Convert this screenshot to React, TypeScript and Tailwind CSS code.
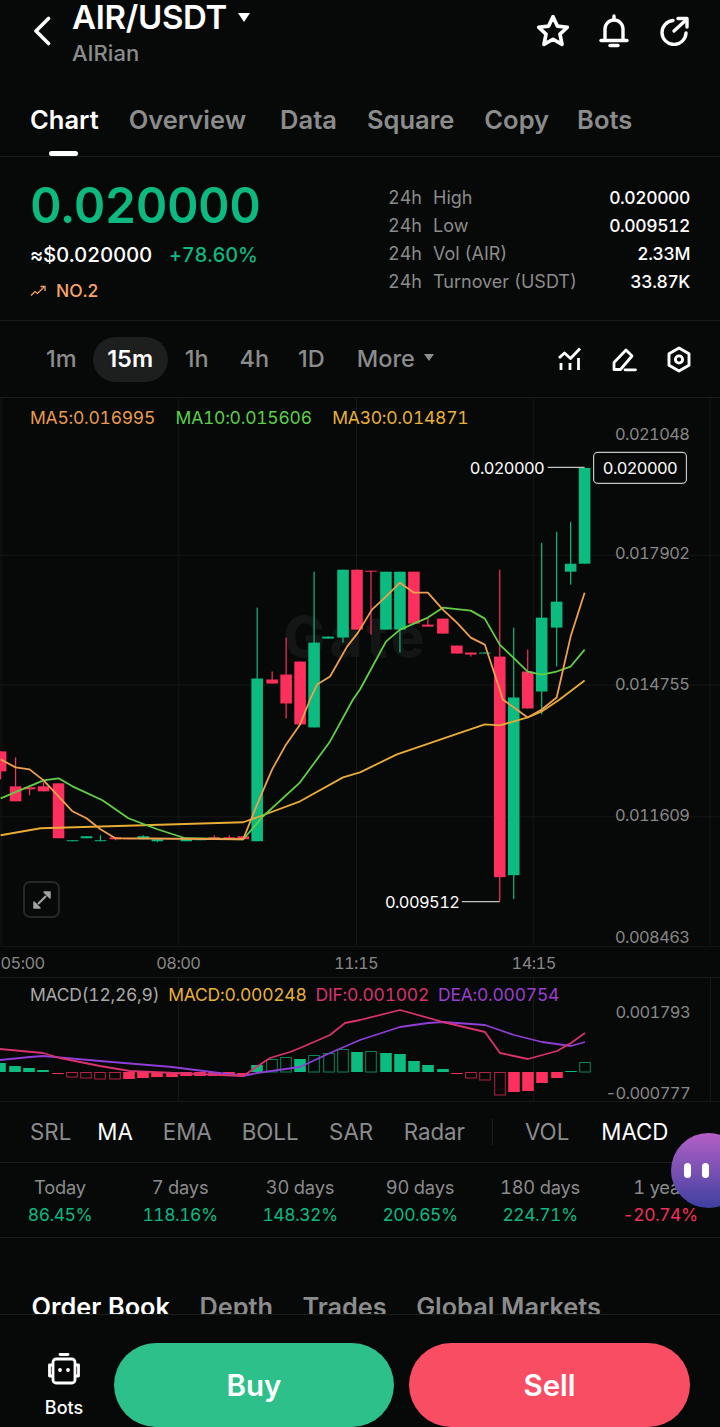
import React from "react";

const GREEN = "#0cbb7f";
const RED = "#fc2f5d";

type Candle = [number, number, number, number, number, "g" | "r"];

// x, body top, body bottom, wick top, wick bottom, colour
const CANDLES: Candle[] = [
  [0, 752, 772, 752, 780, "r"],
  [15, 787, 802, 758, 802, "r"],
  [29, 788, 790, 788, 796, "r"],
  [43, 787, 792, 783, 792, "r"],
  [58, 784, 839, 784, 839, "r"],
  [72, 841, 842, 841, 842, "g"],
  [86, 837, 839, 837, 839, "g"],
  [100, 841, 842, 836, 842, "g"],
  [115, 838, 840, 838, 841, "r"],
  [129, 839, 840, 839, 840, "r"],
  [143, 837, 840, 836, 840, "g"],
  [157, 840, 842, 840, 843, "g"],
  [172, 839, 840, 839, 840, "r"],
  [186, 839, 842, 839, 842, "g"],
  [200, 839, 841, 839, 841, "g"],
  [214, 838, 840, 836, 840, "r"],
  [229, 838, 840, 836, 840, "r"],
  [243, 837, 840, 837, 840, "r"],
  [257, 679, 842, 608, 842, "g"],
  [272, 680, 684, 672, 684, "r"],
  [286, 675, 704, 638, 719, "r"],
  [300, 662, 725, 662, 725, "r"],
  [314, 643, 728, 572, 728, "g"],
  [328, 637, 639, 637, 639, "g"],
  [343, 570, 638, 570, 643, "g"],
  [357, 570, 630, 570, 630, "r"],
  [371, 571, 572, 571, 635, "r"],
  [386, 572, 630, 572, 630, "g"],
  [400, 572, 630, 572, 653, "g"],
  [414, 572, 624, 572, 624, "r"],
  [428, 625, 627, 618, 627, "r"],
  [443, 619, 634, 619, 634, "r"],
  [457, 646, 654, 646, 654, "r"],
  [471, 653, 655, 653, 657, "r"],
  [485, 653, 654, 653, 654, "g"],
  [500, 657, 878, 570, 902, "r"],
  [514, 698, 876, 628, 900, "g"],
  [528, 672, 709, 650, 709, "r"],
  [542, 618, 692, 543, 715, "g"],
  [557, 602, 628, 532, 667, "g"],
  [571, 564, 572, 522, 585, "g"],
  [585, 468, 564, 468, 564, "g"],
];

const MA5 =
  "0,760 15,768 29,770 43,781 58,797 72,812 86,819 100,830 115,839 243,840 257,805 272,770 286,745 300,725 310,700 317,685 330,677 347,647 358,633 372,610 386,597 400,583 414,593 428,593 443,610 457,623 471,638 485,645 500,690 503,700 528,718 542,710 557,698 571,637 585,593";
const MA10 =
  "0,799 43,781 58,779 72,787 102,801 128,819 157,830 185,839 243,840 263,817 300,783 330,742 353,700 360,690 386,642 400,630 428,618 443,608 471,611 485,619 500,645 528,672 542,675 557,672 571,667 585,650";
const MA30 =
  "0,836 40,829 143,826 243,823 260,817 300,802 343,778 360,773 397,755 485,725 500,726 528,718 542,712 560,700 585,681";

const DIF =
  "0,1049 43,1053 60,1058 100,1066 130,1071 243,1076 270,1058 290,1052 300,1048 330,1035 345,1023 360,1020 400,1010 443,1022 485,1032 500,1053 528,1059 557,1051 571,1043 585,1033";
const DEA =
  "0,1060 30,1057 43,1056 100,1061 172,1067 243,1076 257,1073 300,1067 330,1053 360,1040 400,1027 428,1023 443,1022 485,1025 514,1035 542,1042 571,1046 585,1042";

// x, top, bottom, colour, outlined
const MACD_BARS: [number, number, number, "g" | "r", boolean][] = [
  [0, 1063, 1072, "g", false],
  [15, 1066, 1072, "g", false],
  [29, 1068, 1072, "g", false],
  [43, 1070, 1072, "g", false],
  [58, 1073, 1074, "r", false],
  [72, 1072, 1077, "r", true],
  [86, 1072, 1078, "r", true],
  [100, 1072, 1079, "r", true],
  [115, 1072, 1079, "r", true],
  [129, 1072, 1079, "r", false],
  [143, 1072, 1078, "r", false],
  [157, 1072, 1077, "r", false],
  [172, 1072, 1077, "r", false],
  [186, 1072, 1076, "r", false],
  [200, 1072, 1076, "r", false],
  [214, 1072, 1076, "r", false],
  [229, 1072, 1075, "r", false],
  [243, 1073, 1075, "r", false],
  [257, 1065, 1072, "g", false],
  [272, 1059, 1072, "g", true],
  [286, 1057, 1072, "g", true],
  [300, 1059, 1072, "g", false],
  [314, 1055, 1072, "g", true],
  [329, 1053, 1072, "g", true],
  [343, 1049, 1072, "g", true],
  [357, 1052, 1072, "g", false],
  [371, 1051, 1072, "g", true],
  [386, 1053, 1072, "g", false],
  [400, 1054, 1072, "g", false],
  [414, 1061, 1072, "g", false],
  [428, 1065, 1072, "g", false],
  [443, 1069, 1072, "g", false],
  [457, 1073, 1074, "r", false],
  [471, 1072, 1078, "r", true],
  [485, 1072, 1080, "r", true],
  [500, 1072, 1095, "r", true],
  [514, 1072, 1092, "r", false],
  [528, 1072, 1091, "r", false],
  [542, 1072, 1083, "r", false],
  [557, 1072, 1078, "r", false],
  [571, 1071, 1072, "g", false],
  [585, 1062, 1072, "g", true],
];

const STATS = [
  ["High", "0.020000"],
  ["Low", "0.009512"],
  ["Vol (AIR)", "2.33M"],
  ["Turnover (USDT)", "33.87K"],
];

const PERF = [
  ["Today", "86.45%"],
  ["7 days", "118.16%"],
  ["30 days", "148.32%"],
  ["90 days", "200.65%"],
  ["180 days", "224.71%"],
  ["1 year", "-20.74%"],
];

const BackIcon = () => (
  <svg width="18" height="30" viewBox="0 0 18 30" fill="none" stroke="white" strokeWidth="3.6" strokeLinecap="round" strokeLinejoin="round">
    <path d="M15.5 2.500 3 15l12.500 12.500" />
  </svg>
);

const StarIcon = () => (
  <svg width="32" height="32" viewBox="2 2 28 28" fill="none" stroke="white" strokeWidth="3.200" strokeLinejoin="round">
    <path d="M16 3.500l3.800 8.200 8.800 1-6.500 6.100 1.800 8.900-7.900-4.500-7.900 4.500 1.800-8.900-6.500-6.100 8.800-1z" />
  </svg>
);

const BellIcon = () => (
  <svg width="30" height="34" viewBox="0 0 30 34" fill="none" stroke="white" strokeWidth="3.400" strokeLinecap="round" strokeLinejoin="round">
    <path d="M6 26V15a9 9 0 0 1 18 0v11" />
    <path d="M2 26.500h26" />
    <path d="M15 2v3" />
    <path d="M11 31.500h8" />
  </svg>
);

const ShareIcon = () => (
  <svg width="31" height="30" viewBox="0 0 31 30" fill="none" stroke="white" strokeWidth="3.400" strokeLinecap="round" strokeLinejoin="round">
    <path d="M14 4.500A12 12 0 1 0 27 17" />
    <path d="M15 15 27 4" />
    <path d="M19 2.500h9v8.500" />
  </svg>
);

const IndicatorIcon = () => (
  <svg width="24" height="24" viewBox="0 0 24 24" fill="none" stroke="white" strokeWidth="2.800">
    <path d="M1 11l5.500-5 6 5.500L22 1.500" strokeLinejoin="round" />
    <path d="M3 16v7M12 16v7M20.500 11v12" />
  </svg>
);

const PencilIcon = () => (
  <svg width="25" height="25" viewBox="0 0 25 25" fill="none" stroke="white" strokeWidth="2.800" strokeLinejoin="round" strokeLinecap="round">
    <path d="M2 15.500 14 3l6 6L8.500 22.500H2z" />
    <path d="M13 22.800h10.500" />
  </svg>
);

const HexIcon = () => (
  <svg width="24" height="27" viewBox="0 0 24 27" fill="none" stroke="white" strokeWidth="2.900" strokeLinejoin="round">
    <path d="M12 2l10 5.700v11.600L12 25 2 19.300V7.700z" />
    <circle cx="12" cy="13.500" r="3.600" />
  </svg>
);

const TrendIcon = () => (
  <svg width="16" height="12" viewBox="0 0 16 12" fill="none" stroke="#f5a46a" strokeWidth="1.300">
    <path d="M1 10.500l4-4 2.500 2L14 2" />
    <path d="M10.500 1.500H15V6" />
  </svg>
);

const ExpandIcon = () => (
  <svg width="20" height="20" viewBox="0 0 20 20" fill="#a3a3a3" stroke="#a3a3a3" strokeWidth="1.500">
    <path d="M18 2h-6l6 6z" strokeLinejoin="round" />
    <path d="M2 18h6l-6-6z" strokeLinejoin="round" />
    <path d="M14 6 6 14" strokeWidth="2.200" />
  </svg>
);

const BotIcon = () => (
  <svg width="34" height="32" viewBox="0 0 34 32" fill="none" stroke="white" strokeWidth="2.800" strokeLinejoin="round">
    <path d="M13 1.500h8" strokeLinecap="round" />
    <rect x="6" y="6" width="22" height="24" rx="3" />
    <path d="M6 12H2.500v11H6M28 12h3.500v11H28" />
    <circle cx="13" cy="17" r="1.900" fill="white" stroke="none" />
    <circle cx="21" cy="17" r="1.900" fill="white" stroke="none" />
  </svg>
);

const AxisLabel = ({ y, children }: { y: number; children: React.ReactNode }) => (
  <text x="690" y={y} textAnchor="end" fontSize="16.500" letterSpacing="-0.6" fill="#878787">
    {children}
  </text>
);

const KlineChart = () => (
  <svg className="absolute inset-0 w-full h-full" viewBox="0 398 720 580">
    <g stroke="#161717" strokeWidth="1">
      <path d="M0 555.500H720M0 685.500H720M0 817.500H720M0 947.500H720" />
      <path d="M178.500 398V947M356.500 398V947M533.500 398V947M710.500 398V947M0.500 398V947" />
    </g>
    <text x="356" y="657" textAnchor="middle" fontSize="56" fontWeight="800" letterSpacing="4" fill="#141616">
      Gate
    </text>
    {CANDLES.map(([x, top, bottom, wickTop, wickBottom, c], i) => (
      <g key={i} fill={c === "g" ? GREEN : RED}>
        <rect x={x - 0.6} y={wickTop} width="1.200" height={wickBottom - wickTop} />
        <rect x={x - 5.800} y={top} width="11.600" height={bottom - top} />
      </g>
    ))}
    <polyline points={MA30} fill="none" stroke="#e9ac35" strokeWidth="1.800" strokeLinejoin="round" />
    <polyline points={MA10} fill="none" stroke="#62cf47" strokeWidth="1.800" strokeLinejoin="round" />
    <polyline points={MA5} fill="none" stroke="#eda04f" strokeWidth="1.800" strokeLinejoin="round" />
    <AxisLabel y={440}>0.021048</AxisLabel>
    <AxisLabel y={559}>0.017902</AxisLabel>
    <AxisLabel y={691}>0.014755</AxisLabel>
    <AxisLabel y={822}>0.011609</AxisLabel>
    <AxisLabel y={944}>0.008463</AxisLabel>
    <rect x="594" y="452.500" width="93" height="31" rx="4" fill="#070808" stroke="#c4c4c4" strokeWidth="1.200" />
    <g fontSize="16.500" letterSpacing="-0.6" fill="white">
      <text x="640.500" y="474" textAnchor="middle">0.020000</text>
      <text x="470" y="474">0.020000</text>
      <text x="385" y="909">0.009512</text>
    </g>
    <path d="M548 467.500H585" stroke="#c4c4c4" strokeWidth="1.200" />
    <path d="M462 902.500H500" stroke="#c4c4c4" strokeWidth="1.200" />
    <g fontSize="16.500" letterSpacing="-0.6" fill="#878787" textAnchor="middle">
      <text x="22" y="970">05:00</text>
      <text x="178" y="970">08:00</text>
      <text x="356" y="970">11:15</text>
      <text x="534" y="970">14:15</text>
    </g>
  </svg>
);

const MacdChart = () => (
  <svg className="absolute inset-0 w-full h-full" viewBox="0 978 720 124">
    <g stroke="#161717" strokeWidth="1">
      <path d="M178.500 978V1102M533.500 978V1102M710.500 978V1102" />
      <path d="M0 1101.500H720" />
    </g>
    {MACD_BARS.map(([x, top, bottom, c, outlined], i) => {
      const color = c === "g" ? GREEN : RED;
      return outlined ? (
        <rect key={i} x={x - 5.300} y={top + 0.5} width="10.600" height={bottom - top - 0.5} fill="none" stroke={color} strokeOpacity="0.7" strokeWidth="1" />
      ) : (
        <rect key={i} x={x - 5.800} y={top} width="11.600" height={bottom - top} fill={color} />
      );
    })}
    <polyline points={DEA} fill="none" stroke="#8f3fd6" strokeWidth="1.800" strokeLinejoin="round" />
    <polyline points={DIF} fill="none" stroke="#d8336f" strokeWidth="1.800" strokeLinejoin="round" />
    <AxisLabel y={1018}>0.001793</AxisLabel>
    <AxisLabel y={1099}>-0.000777</AxisLabel>
  </svg>
);

const App: React.FC = () => {
  return (
    <div className="relative w-[720px] h-[1427px] overflow-hidden bg-[#070808] flex flex-col font-['Inter',sans-serif] tabular-nums text-white">
      {/* header */}
      <div className="h-[90px] shrink-0 flex items-start">
        <div className="w-[72px] pl-[33px] pt-[16px]">
          <BackIcon />
        </div>
        <div className="flex-1">
          <div className="flex items-center h-[34px]">
            <span className="text-[33px] leading-[34px] font-semibold tracking-[-0.3px]">AIR/USDT</span>
            <span className="ml-[11px] w-0 h-0 border-x-[6.5px] border-x-transparent border-t-[9px] border-t-white" />
          </div>
          <div className="mt-[6px] text-[22px] leading-[26px] font-medium text-[#8b8c8c]">AIRian</div>
        </div>
        <div className="flex items-center gap-[30px] pt-[14px] pr-[30px]">
          <StarIcon />
          <BellIcon />
          <ShareIcon />
        </div>
      </div>

      {/* tabs */}
      <div className="h-[67px] shrink-0 border-b border-[#1a1b1b] flex items-start px-[30px] pt-[15px] text-[25.5px] leading-[30px] font-semibold text-[#8b8c8c]">
        <div className="relative text-white">
          Chart
          <span className="absolute left-[19px] top-[46px] w-[29px] h-[5px] rounded-full bg-white" />
        </div>
        <div className="ml-[30px]">Overview</div>
        <div className="ml-[34px]">Data</div>
        <div className="ml-[30px]">Square</div>
        <div className="ml-[30px]">Copy</div>
        <div className="ml-[28px]">Bots</div>
      </div>

      {/* price + 24h stats */}
      <div className="h-[164px] shrink-0 border-b border-[#1a1b1b] flex px-[30px]">
        <div className="w-[358px] pt-[18px]">
          <div className="text-[49px] leading-[62px] font-semibold tracking-[-0.6px] text-[#0cb981]">0.020000</div>
          <div className="mt-[3px] flex items-center gap-[17px] h-[30px] font-medium">
            <span className="text-[20.5px] tracking-[-0.3px]">≈$0.020000</span>
            <span className="text-[20px] text-[#0cb981] tracking-[-0.2px]">+78.60%</span>
          </div>
          <div className="mt-[8px] flex items-center gap-[10px] text-[17.5px] leading-[26px] font-medium text-[#f5a46a]">
            <TrendIcon />
            <span>NO.2</span>
          </div>
        </div>
        <div className="flex-1 pt-[27px] text-[18px] leading-[28px]">
          {STATS.map(([k, v]) => (
            <div key={k} className="flex justify-between items-center">
              <span className="text-[#8b8c8c]">
                <span className="inline-block w-[45px]">24h</span>
                {k}
              </span>
              <span className="text-[17.5px] tracking-[-0.4px] font-medium">{v}</span>
            </div>
          ))}
        </div>
      </div>

      {/* intervals */}
      <div className="h-[77px] shrink-0 border-b border-[#1a1b1b] flex items-center pl-[46px] pr-[29px] text-[23.5px] font-medium normal-nums text-[#8b8c8c]">
        <span>1m</span>
        <span className="ml-[16px] h-[45px] w-[75px] rounded-full bg-[#1d1e1e] flex items-center justify-center text-white font-semibold">15m</span>
        <span className="ml-[17px]">1h</span>
        <span className="ml-[31px]">4h</span>
        <span className="ml-[29px]">1D</span>
        <span className="ml-[32px]">More</span>
        <span className="ml-[9px] mb-[3px] w-0 h-0 border-x-[5.5px] border-x-transparent border-t-[7px] border-t-[#8b8c8c]" />
        <div className="ml-auto flex items-center gap-[30px]">
          <IndicatorIcon />
          <PencilIcon />
          <HexIcon />
        </div>
      </div>

      {/* kline */}
      <div className="relative h-[580px] shrink-0 border-b border-[#1a1b1b]">
        <KlineChart />
        <div className="absolute left-[30px] top-[9px] flex gap-[20.5px] text-[17.5px] tracking-[-0.25px] leading-[22px]">
          <span className="text-[#e99c4f]">MA5:0.016995</span>
          <span className="text-[#5bd04a]">MA10:0.015606</span>
          <span className="text-[#e9b13a]">MA30:0.014871</span>
        </div>
        <div className="absolute left-[23px] top-[483px] w-[37px] h-[37px] rounded-[7px] border-2 border-[#262727] flex items-center justify-center">
          <ExpandIcon />
        </div>
      </div>

      {/* macd */}
      <div className="relative h-[124px] shrink-0">
        <MacdChart />
        <div className="absolute left-[30px] top-[6px] flex gap-[9px] text-[17.5px] tracking-[-0.25px] leading-[22px]">
          <span className="text-[#a8a8a8]">MACD(12,26,9)</span>
          <span className="text-[#e9b13a]">MACD:0.000248</span>
          <span className="text-[#d8336f]">DIF:0.001002</span>
          <span className="text-[#9a3fd0]">DEA:0.000754</span>
        </div>
      </div>

      {/* indicators */}
      <div className="h-[61px] shrink-0 border-b border-[#1a1b1b] flex items-center pl-[30px] text-[22.3px] text-[#8b8c8c]">
        <span>SRL</span>
        <span className="ml-[26px] text-white">MA</span>
        <span className="ml-[30px]">EMA</span>
        <span className="ml-[30px]">BOLL</span>
        <span className="ml-[30.500px]">SAR</span>
        <span className="ml-[30.500px]">Radar</span>
        <span className="ml-[27px] w-px h-[26px] bg-[#1f2020]" />
        <span className="ml-[32px]">VOL</span>
        <span className="ml-[32px] text-white">MACD</span>
      </div>

      {/* performance */}
      <div className="h-[75px] shrink-0 border-b border-[#1a1b1b] grid grid-cols-6 pt-[12px] text-center">
        {PERF.map(([label, pct]) => (
          <div key={label}>
            <div className="text-[18.3px] tracking-[-0.2px] leading-[25px] text-[#8b8c8c]">{label}</div>
            <div className={`text-[17.5px] tracking-[-0.5px] leading-[30px] ${pct.startsWith("-") ? "text-[#f0305a]" : "text-[#0cb981]"}`}>{pct}</div>
          </div>
        ))}
      </div>

      {/* order book tabs, cut by the action bar */}
      <div className="h-[76px] shrink-0 overflow-hidden flex items-start gap-[29.5px] pl-[31.5px] pt-[54px] text-[25.3px] leading-[30px] font-semibold text-[#8b8c8c]">
        <span className="text-white">Order Book</span>
        <span>Depth</span>
        <span>Trades</span>
        <span>Global Markets</span>
      </div>

      {/* action bar */}
      <div className="h-[113px] shrink-0 border-t border-[#1a1b1b] flex items-start pt-[28px]">
        <div className="w-[114px] pl-[14px] shrink-0 flex flex-col items-center pt-[10px]">
          <BotIcon />
          <span className="mt-[11px] text-[18px] leading-[24px] font-medium">Bots</span>
        </div>
        <div className="w-[280px] h-[84px] rounded-full bg-[#2dc08a] flex items-center justify-center text-[29.5px] font-semibold">Buy</div>
        <div className="ml-[15px] w-[281px] h-[84px] rounded-full bg-[#f94d63] flex items-center justify-center text-[29.5px] font-semibold">Sell</div>
      </div>

      {/* floating assistant */}
      <div className="absolute left-[671px] top-[1133px] w-[75px] h-[75px] rounded-full bg-gradient-to-b from-[#b45fc6] to-[#3e3f9f] flex items-center gap-[10.5px] pl-[13px]">
        <span className="w-[7px] h-[15px] rounded-full bg-white" />
        <span className="w-[7px] h-[15px] rounded-full bg-white" />
      </div>
    </div>
  );
};

export default App;
